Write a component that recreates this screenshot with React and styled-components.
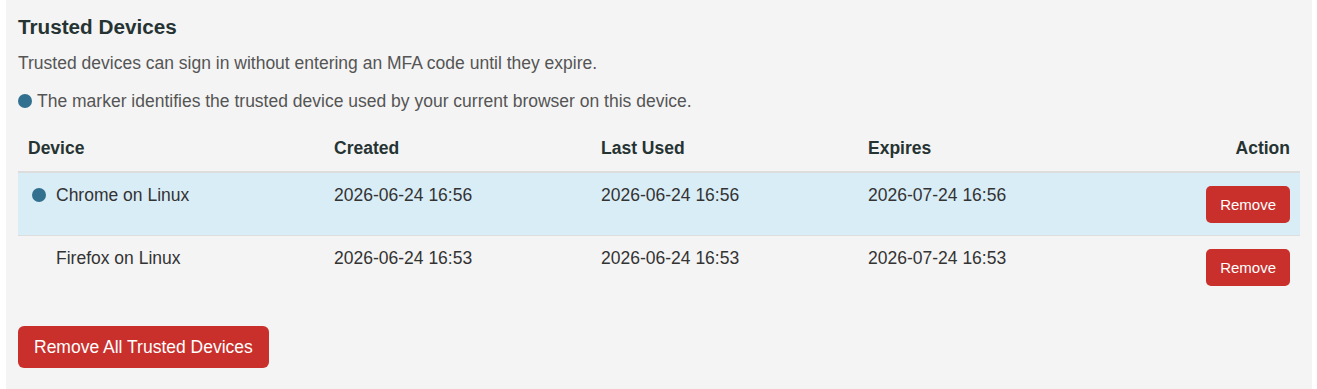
import React from 'react';
import styled, { createGlobalStyle } from 'styled-components';

const GlobalStyle = createGlobalStyle`
  html, body {
    margin: 0;
    padding: 0;
    background: #ffffff;
  }
  body {
    font-family: "Liberation Sans", Arial, sans-serif;
  }
`;

const devices = [
  { id: 1, name: 'Chrome on Linux', created: '2026-06-24 16:56', lastUsed: '2026-06-24 16:56', expires: '2026-07-24 16:56', current: true },
  { id: 2, name: 'Firefox on Linux', created: '2026-06-24 16:53', lastUsed: '2026-06-24 16:53', expires: '2026-07-24 16:53', current: false },
];

const App = () => {
  return (
    <>
      <GlobalStyle />
      <Page>
        <Panel>
          <Title>Trusted Devices</Title>
          <Text>Trusted devices can sign in without entering an MFA code until they expire.</Text>
          <Text $mb="13px">
            <Marker /> The marker identifies the trusted device used by your current browser on this device.
          </Text>
          <Table>
            <thead>
              <tr>
                <Th $w="306px">Device</Th>
                <Th $w="267px">Created</Th>
                <Th $w="267px">Last Used</Th>
                <Th $w="267px">Expires</Th>
                <Th $right>Action</Th>
              </tr>
            </thead>
            <tbody>
              {devices.map((d, i) => (
                <Row key={d.id} $active={d.current} $last={i === devices.length - 1}>
                  <Td>
                    <DeviceName>
                      <MarkerSlot>{d.current && <Marker />}</MarkerSlot>
                      {d.name}
                    </DeviceName>
                  </Td>
                  <Td>{d.created}</Td>
                  <Td>{d.lastUsed}</Td>
                  <Td>{d.expires}</Td>
                  <Td $right>
                    <SmallButton>Remove</SmallButton>
                  </Td>
                </Row>
              ))}
            </tbody>
          </Table>
          <BigButton>Remove All Trusted Devices</BigButton>
        </Panel>
      </Page>
    </>
  );
};

const Page = styled.div`
  padding: 0 5px 0 6px;
`;

const Panel = styled.div`
  background-color: #f4f4f4;
  padding: 14px 12px 21px;
  min-height: 389px;
  box-sizing: border-box;
`;

const Title = styled.h2`
  margin: 0 0 12px;
  font-size: 20.7px;
  line-height: 25px;
  font-weight: bold;
  color: #263333;
`;

const Text = styled.p`
  margin: 0 0 ${(p) => p.$mb || '14px'};
  font-size: 17.5px;
  line-height: 24px;
  color: #555555;
  display: flex;
  align-items: center;
  gap: 5px;
`;

const Marker = styled.span`
  display: inline-block;
  width: 14px;
  height: 14px;
  border-radius: 50%;
  background-color: #31708f;
  flex: none;
`;

const Table = styled.table`
  width: 100%;
  table-layout: fixed;
  border-collapse: collapse;
  margin: 0;
  font-size: 17.5px;
  color: #333333;
`;

const Th = styled.th`
  box-sizing: border-box;
  text-align: ${(p) => (p.$right ? 'right' : 'left')};
  width: ${(p) => p.$w || 'auto'};
  padding: 12px 10px 12px;
  line-height: 21px;
  font-weight: bold;
  color: #263333;
  border-bottom: 2px solid #dddddd;
`;

const Row = styled.tr`
  background-color: ${(p) => (p.$active ? '#d9edf7' : 'transparent')};
  border-bottom: ${(p) => (p.$last ? 'none' : '1px solid #dddddd')};
`;

const Td = styled.td`
  padding: 13px 10px 12px;
  vertical-align: top;
  line-height: 18px;
  text-align: ${(p) => (p.$right ? 'right' : 'left')};
`;

const DeviceName = styled.div`
  display: flex;
  align-items: center;
  gap: 10px;
`;

const MarkerSlot = styled.span`
  width: 14px;
  height: 14px;
  margin-left: 4px;
  display: inline-flex;
`;

const SmallButton = styled.button`
  font-family: "Liberation Sans", Arial, sans-serif;
  font-size: 15px;
  color: #ffffff;
  background-color: #c9302c;
  border: none;
  border-radius: 5px;
  height: 37px;
  padding: 0 14px;
  cursor: pointer;
`;

const BigButton = styled.button`
  margin-top: 28px;
  font-family: "Liberation Sans", Arial, sans-serif;
  font-size: 17.5px;
  color: #ffffff;
  background-color: #c9302c;
  border: none;
  border-radius: 6px;
  height: 42px;
  padding: 0 16px;
  cursor: pointer;
`;

export default App;
